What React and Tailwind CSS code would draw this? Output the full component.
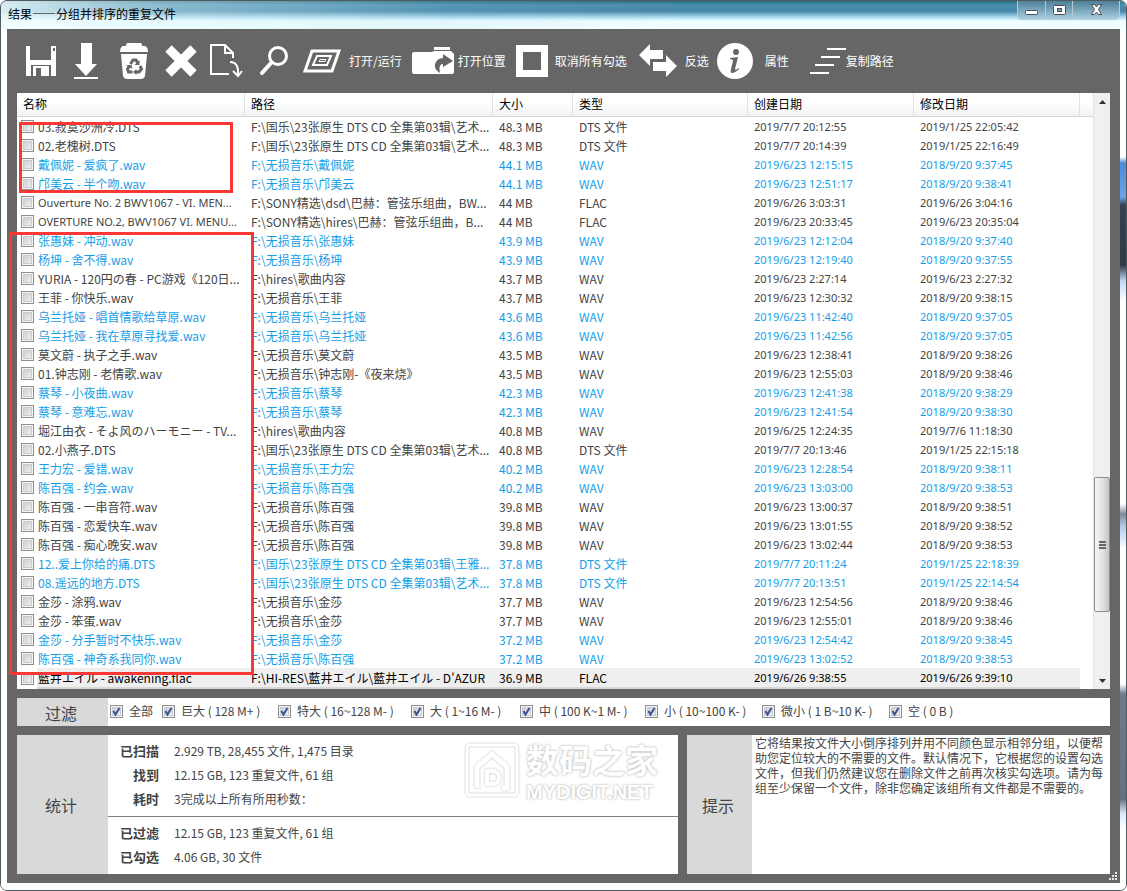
const latinText = 'font-["Noto_Sans","Noto_Sans_CJK_SC",sans-serif] text-[11px]'

const columns = [
  { key: 'name', label: '名称', width: 'w-[228px]' },
  { key: 'path', label: '路径', width: 'w-[248px]' },
  { key: 'size', label: '大小', width: 'w-[80px]' },
  { key: 'type', label: '类型', width: 'w-[175px]' },
  { key: 'created', label: '创建日期', width: 'w-[166px]' },
  { key: 'modified', label: '修改日期', width: 'w-[166px]' },
]

// [group colour, name, path, size, type, created, modified]
const files = [
  [0, '03.寂寞沙洲冷.DTS', 'F:\\国乐\\23张原生 DTS CD 全集第03辑\\艺术...', '48.3 MB', 'DTS 文件', '2019/7/7 20:12:55', '2019/1/25 22:05:42'],
  [0, '02.老槐树.DTS', 'F:\\国乐\\23张原生 DTS CD 全集第03辑\\艺术...', '48.3 MB', 'DTS 文件', '2019/7/7 20:14:39', '2019/1/25 22:16:49'],
  [1, '戴佩妮 - 爱疯了.wav', 'F:\\无损音乐\\戴佩妮', '44.1 MB', 'WAV', '2019/6/23 12:15:15', '2018/9/20 9:37:45'],
  [1, '邝美云 - 半个吻.wav', 'F:\\无损音乐\\邝美云', '44.1 MB', 'WAV', '2019/6/23 12:51:17', '2018/9/20 9:38:41'],
  [0, 'Ouverture No. 2 BWV1067 - VI. MEN...', 'F:\\SONY精选\\dsd\\巴赫：管弦乐组曲，BW...', '44 MB', 'FLAC', '2019/6/26 3:03:31', '2019/6/26 3:04:16'],
  [0, 'OVERTURE NO.2, BWV1067 VI. MENU...', 'F:\\SONY精选\\hires\\巴赫：管弦乐组曲，B...', '44 MB', 'FLAC', '2019/6/23 20:33:45', '2019/6/23 20:35:04'],
  [1, '张惠妹 - 冲动.wav', 'F:\\无损音乐\\张惠妹', '43.9 MB', 'WAV', '2019/6/23 12:12:04', '2018/9/20 9:37:40'],
  [1, '杨坤 - 舍不得.wav', 'F:\\无损音乐\\杨坤', '43.9 MB', 'WAV', '2019/6/23 12:19:40', '2018/9/20 9:37:55'],
  [0, 'YURIA - 120円の春 - PC游戏《120日...', 'F:\\hires\\歌曲内容', '43.7 MB', 'WAV', '2019/6/23 2:27:14', '2019/6/23 2:27:32'],
  [0, '王菲 - 你快乐.wav', 'F:\\无损音乐\\王菲', '43.7 MB', 'WAV', '2019/6/23 12:30:32', '2018/9/20 9:38:15'],
  [1, '乌兰托娅 - 唱首情歌给草原.wav', 'F:\\无损音乐\\乌兰托娅', '43.6 MB', 'WAV', '2019/6/23 11:42:40', '2018/9/20 9:37:05'],
  [1, '乌兰托娅 - 我在草原寻找爱.wav', 'F:\\无损音乐\\乌兰托娅', '43.6 MB', 'WAV', '2019/6/23 11:42:56', '2018/9/20 9:37:05'],
  [0, '莫文蔚 - 执子之手.wav', 'F:\\无损音乐\\莫文蔚', '43.5 MB', 'WAV', '2019/6/23 12:38:41', '2018/9/20 9:38:26'],
  [0, '01.钟志刚 - 老情歌.wav', 'F:\\无损音乐\\钟志刚-《夜来烧》', '43.5 MB', 'WAV', '2019/6/23 12:55:03', '2018/9/20 9:38:46'],
  [1, '蔡琴 - 小夜曲.wav', 'F:\\无损音乐\\蔡琴', '42.3 MB', 'WAV', '2019/6/23 12:41:38', '2018/9/20 9:38:29'],
  [1, '蔡琴 - 意难忘.wav', 'F:\\无损音乐\\蔡琴', '42.3 MB', 'WAV', '2019/6/23 12:41:54', '2018/9/20 9:38:30'],
  [0, '堀江由衣 - そよ风のハーモニー - TV...', 'F:\\hires\\歌曲内容', '40.8 MB', 'WAV', '2019/6/25 12:24:35', '2019/7/6 11:18:30'],
  [0, '02.小燕子.DTS', 'F:\\国乐\\23张原生 DTS CD 全集第03辑\\艺术...', '40.8 MB', 'DTS 文件', '2019/7/7 20:13:46', '2019/1/25 22:15:18'],
  [1, '王力宏 - 爱错.wav', 'F:\\无损音乐\\王力宏', '40.2 MB', 'WAV', '2019/6/23 12:28:54', '2018/9/20 9:38:11'],
  [1, '陈百强 - 约会.wav', 'F:\\无损音乐\\陈百强', '40.2 MB', 'WAV', '2019/6/23 13:03:00', '2018/9/20 9:38:53'],
  [0, '陈百强 - 一串音符.wav', 'F:\\无损音乐\\陈百强', '39.8 MB', 'WAV', '2019/6/23 13:00:37', '2018/9/20 9:38:51'],
  [0, '陈百强 - 恋爱快车.wav', 'F:\\无损音乐\\陈百强', '39.8 MB', 'WAV', '2019/6/23 13:01:55', '2018/9/20 9:38:52'],
  [0, '陈百强 - 痴心晚安.wav', 'F:\\无损音乐\\陈百强', '39.8 MB', 'WAV', '2019/6/23 13:02:44', '2018/9/20 9:38:53'],
  [1, '12..爱上你给的痛.DTS', 'F:\\国乐\\23张原生 DTS CD 全集第03辑\\王雅...', '37.8 MB', 'DTS 文件', '2019/7/7 20:11:24', '2019/1/25 22:18:39'],
  [1, '08.遥远的地方.DTS', 'F:\\国乐\\23张原生 DTS CD 全集第03辑\\艺术...', '37.8 MB', 'DTS 文件', '2019/7/7 20:13:51', '2019/1/25 22:14:54'],
  [0, '金莎 - 涂鸦.wav', 'F:\\无损音乐\\金莎', '37.7 MB', 'WAV', '2019/6/23 12:54:56', '2018/9/20 9:38:46'],
  [0, '金莎 - 笨蛋.wav', 'F:\\无损音乐\\金莎', '37.7 MB', 'WAV', '2019/6/23 12:55:01', '2018/9/20 9:38:46'],
  [1, '金莎 - 分手暂时不快乐.wav', 'F:\\无损音乐\\金莎', '37.2 MB', 'WAV', '2019/6/23 12:54:42', '2018/9/20 9:38:45'],
  [1, '陈百强 - 神奇系我同你.wav', 'F:\\无损音乐\\陈百强', '37.2 MB', 'WAV', '2019/6/23 13:02:52', '2018/9/20 9:38:53'],
  [2, '藍井エイル - awakening.flac', "F:\\HI-RES\\藍井エイル\\藍井エイル - D'AZUR", '36.9 MB', 'FLAC', '2019/6/26 9:38:55', '2019/6/26 9:39:10'],
]

const rowColors = ['text-[#444444]', 'text-[#159ee8]', 'text-black']

const filters = [
  { id: 'all', label: '全部', width: 'w-[52px]' },
  { id: 'huge', label: '巨大 ( 128 M+ )', width: 'w-[116px]' },
  { id: 'xlarge', label: '特大 ( 16~128 M- )', width: 'w-[133px]' },
  { id: 'large', label: '大 ( 1~16 M- )', width: 'w-[109px]' },
  { id: 'medium', label: '中 ( 100 K~1 M- )', width: 'w-[125px]' },
  { id: 'small', label: '小 ( 10~100 K- )', width: 'w-[117px]' },
  { id: 'tiny', label: '微小 ( 1 B~10 K- )', width: 'w-[127px]' },
  { id: 'empty', label: '空 ( 0 B )', width: 'w-[80px]' },
]

const scanStats = [
  ['已扫描', '2.929 TB, 28,455 文件, 1,475 目录'],
  ['找到', '12.15 GB, 123 重复文件, 61 组'],
  ['耗时', '3完成以上所有所用秒数：'],
]

const filterStats = [
  ['已过滤', '12.15 GB, 123 重复文件, 61 组'],
  ['已勾选', '4.06 GB, 30 文件'],
]

const SaveIcon = () => (
  <svg width="32" height="32" viewBox="0 0 32 32" fill="#fff">
    <path d="M1 1H5V15H26V1H31V31H26V20H6V31H1Z" />
    <path d="M8 21H24V31H16V23H11V31H8Z" />
    <path d="M28 3H30V6H28Z" fill="#666" />
  </svg>
)

const DownloadIcon = () => (
  <svg width="26" height="38" viewBox="0 0 26 38" fill="#fff">
    <path d="M8 1H19V22H24L13 34L2 22H8Z" />
    <path d="M1 35H25V37H1Z" />
  </svg>
)

const TrashIcon = () => (
  <svg width="30" height="38" viewBox="0 0 30 38">
    <path d="M7 5V3Q7 1 9 1H21Q23 1 23 3V5H20V4H10V5Z" fill="#fff" />
    <path d="M4 4H26Q29 5 29 10H1Q1 5 4 4Z" fill="#fff" />
    <path d="M2 12H28L26 34Q25 37 22 37H8Q5 37 4 34Z" fill="#fff" />
    <g fill="none" stroke="#666" strokeWidth="3">
      <path d="M11.500 22L14 18H17L19 21.500" />
      <path d="M21 24L22.500 27L20 30H16.500" />
      <path d="M13.500 30H9.500L8.500 27L10.500 24" />
    </g>
    <path d="M20.500 18V23H15.500ZM17.500 27V33L14 30ZM7 23H12.500L13.500 27Z" fill="#666" />
  </svg>
)

const DeleteIcon = () => (
  <svg width="32" height="32" viewBox="0 0 32 32">
    <path d="M3.500 3.500L28.500 28.500M28.500 3.500L3.500 28.500" stroke="#fff" strokeWidth="9" />
  </svg>
)

const ExportIcon = () => (
  <svg width="34" height="36" viewBox="0 0 34 36" fill="none" stroke="#fff" strokeWidth="2">
    <path d="M20 31H2V2H16L24 10V15" />
    <path d="M16 2V10H24" />
    <path d="M21 19Q30 19 29 32" />
    <path d="M24 28L29 33L33 28" />
  </svg>
)

const SearchIcon = () => (
  <svg width="30" height="32" viewBox="0 0 30 32" fill="none" stroke="#fff" strokeLinecap="round">
    <circle cx="19" cy="11" r="8.500" strokeWidth="3" />
    <path d="M12 18L3 28" strokeWidth="4" />
  </svg>
)

const RunIcon = () => (
  <svg width="38" height="24" viewBox="0 0 38 24" fill="none" stroke="#fff">
    <path d="M9 2H36L29 22H2Z" strokeWidth="3" />
    <path d="M14 7H28L24 16H10Z" strokeWidth="2" />
    <path d="M17 10.500H23L22 12.500H16Z" strokeWidth="1" />
  </svg>
)

const FolderIcon = () => (
  <svg width="42" height="30" viewBox="0 0 42 30">
    <path d="M22 1H38V4H22Z" fill="#fff" />
    <path d="M2 6H20L22 5H39L42 8V26Q42 28 40 28H2Q0 28 0 26V8Q0 6 2 6Z" fill="#fff" />
    <path d="M31 8L41 15L31 21V18Q26 18 28 27Q22 24 23 18Q25 12 31 12Z" fill="#666" />
  </svg>
)

const SquareIcon = () => (
  <svg width="32" height="32" viewBox="0 0 32 32">
    <path fillRule="evenodd" d="M0 0H32V32H0ZM7 7V25H25V7Z" fill="#fff" />
  </svg>
)

const InvertIcon = () => (
  <svg width="38" height="34" viewBox="0 0 38 34" fill="#fff">
    <path d="M0 11L11 0V6H24V15H11V22Z" />
    <path d="M14 18H27V11L38 22L27 33V27H14Z" />
  </svg>
)

const InfoIcon = () => (
  <svg width="36" height="36" viewBox="0 0 36 36">
    <circle cx="18" cy="18" r="18" fill="#fff" />
    <circle cx="19" cy="9" r="3" fill="#666" />
    <path d="M13 15L21 14L18 26Q18 28 22 25L22 26Q18 30 15 30Q13 30 14 26L16 18Q16 16 13 16Z" fill="#666" />
  </svg>
)

const CopyPathIcon = () => (
  <svg width="37" height="28" viewBox="0 0 37 28" stroke="#fff" strokeWidth="2">
    <path d="M18 2H37M12 10H31M6 18H25M1 26H20" />
  </svg>
)

const tools = [
  { key: 'save', title: '保存', icon: SaveIcon, className: 'ml-2' },
  { key: 'download', title: '导入', icon: DownloadIcon, className: 'ml-4' },
  { key: 'recycle', title: '回收站', icon: TrashIcon, className: 'ml-5' },
  { key: 'delete', title: '删除', icon: DeleteIcon, className: 'ml-4' },
  { key: 'move', title: '移动', icon: ExportIcon, className: 'ml-3' },
  { key: 'search', title: '搜索', icon: SearchIcon, className: 'ml-4' },
  { key: 'run', label: '打开/运行', icon: RunIcon, className: 'ml-3.5 gap-2' },
  { key: 'location', label: '打开位置', icon: FolderIcon, className: 'ml-2.5 gap-1' },
  { key: 'uncheck', label: '取消所有勾选', icon: SquareIcon, className: 'ml-2.5 gap-[7px]' },
  { key: 'invert', label: '反选', icon: InvertIcon, className: 'ml-3 gap-2' },
  { key: 'props', label: '属性', icon: InfoIcon, className: 'ml-2 gap-3' },
  { key: 'copy', label: '复制路径', icon: CopyPathIcon, className: 'ml-5' },
]

function Checkbox({ id, defaultChecked = false }) {
  return (
    <span className="relative block size-[13px] shrink-0">
      <input
        id={id}
        type="checkbox"
        defaultChecked={defaultChecked}
        className="peer block size-[13px] appearance-none border border-[#8e8f8f] bg-linear-to-br from-[#c4c8cc] to-[#f6f6f6] shadow-[inset_0_0_0_1px_#f4f4f4,inset_0_0_0_2px_#c8ccd0]"
      />
      <svg
        viewBox="0 0 13 13"
        className="pointer-events-none absolute inset-0 hidden size-[13px] peer-checked:block"
        fill="none"
        stroke="#3d4f96"
        strokeWidth="2"
      >
        <path d="M3.500 6L5.500 9.500L9.500 3" />
      </svg>
    </span>
  )
}

function TitleBar() {
  return (
    <header className="flex h-7 items-start justify-between bg-[linear-gradient(to_right,rgba(240,253,255,0.85)_0%,rgba(220,245,250,0.45)_14%,rgba(160,210,225,0.15)_40%,transparent_60%),linear-gradient(to_bottom,#2b6d80_0,#4a8fb0_4px,#4585a8_10px,#b8e4f6_17px,#effdff_20px,#f2ffff_28px)] pr-1.5 pl-[7px]">
      <h1 className="pt-1 text-[12px] leading-[18px] text-black">结果——分组并排序的重复文件</h1>
      <div className="flex h-[19px] overflow-hidden rounded-b-[5px] border border-t-0 border-[#b5cbd6] bg-linear-to-b from-[#4d8098] to-[#a9cfe0]">
        <button aria-label="最小化" className="flex w-[28px] items-center justify-center border-r border-[#b5cbd6]">
          <svg width="13" height="14" viewBox="0 0 13 14">
            <rect x="0.500" y="7.500" width="12" height="4" rx="1" fill="#fff" stroke="#4a4a5a" />
          </svg>
        </button>
        <button aria-label="最大化" className="flex w-[27px] items-center justify-center border-r border-[#b5cbd6]">
          <svg width="13" height="11" viewBox="0 0 13 11">
            <rect x="0.500" y="0.500" width="12" height="9" rx="1" fill="#fff" stroke="#4a4a5a" />
            <rect x="4.500" y="3.500" width="4" height="3" fill="#6fa0b8" stroke="#4a4a5a" />
          </svg>
        </button>
        <button aria-label="关闭" className="flex w-[46px] items-center justify-center">
          <svg width="13" height="12" viewBox="0 0 13 12">
            <path
              d="M1.500 0.500H4.500L6.500 3L8.500 0.500H11.500L8.500 5.500L11.500 10.500H8.500L6.500 8L4.500 10.500H1.500L4.500 5.500Z"
              fill="#fff"
              stroke="#4a4a5a"
            />
          </svg>
        </button>
      </div>
    </header>
  )
}

function Toolbar() {
  return (
    <div className="flex h-16 items-center">
      {tools.map((tool) => {
        const Icon = tool.icon
        return (
          <button
            key={tool.key}
            aria-label={tool.label || tool.title}
            className={`flex shrink-0 items-center text-[12px] leading-4 whitespace-nowrap text-white ${tool.className}`}
          >
            <Icon />
            {tool.label && <span>{tool.label}</span>}
          </button>
        )
      })}
    </div>
  )
}

function FileRow({ file, index }) {
  const [color, name, path, size, type, created, modified] = file
  const selected = color === 2
  const fill = selected ? 'border-b-2 border-[#d8d8d8] bg-[#efefef]' : ''
  const cell = `overflow-hidden p-0 pl-1.5 leading-[19px] ${fill}`
  const latinName = /^[\x20-\x7e]+$/.test(name)

  return (
    <tr className={`h-[19px] ${rowColors[color]}`}>
      <td className="p-0">
        <div className="flex items-center pl-1">
          <Checkbox id={`file-${index}`} />
          <label
            htmlFor={`file-${index}`}
            className={`ml-[3px] h-[19px] min-w-0 flex-1 overflow-hidden pl-px leading-[19px] ${fill} ${selected ? 'box-content' : ''} ${latinName ? latinText : ''}`}
          >
            {name}
          </label>
        </div>
      </td>
      <td className={cell}>{path}</td>
      <td className={cell}>{size}</td>
      <td className={cell}>{type}</td>
      <td className={`${cell} ${latinText}`}>{created}</td>
      <td className={`${cell} ${latinText}`}>{modified}</td>
      <td className="p-0" />
    </tr>
  )
}

function FileList() {
  return (
    <section className="relative flex bg-white">
      <div className="min-w-0 flex-1 overflow-hidden">
        <table className="w-full table-fixed border-separate border-spacing-0 text-left text-[12px] whitespace-nowrap">
          <thead>
            <tr className="h-6">
              {columns.map((col) => (
                <th
                  key={col.key}
                  className={`border-r border-b border-r-[#e0e3e6] border-b-[#d5d5d5] bg-linear-to-b from-white from-40% to-[#f1f2f4] p-0 pb-0.5 pl-1.5 font-normal text-black ${col.width}`}
                >
                  {col.label}
                </th>
              ))}
              <th className="border-b border-[#d5d5d5] bg-linear-to-b from-white from-40% to-[#f1f2f4] p-0" />
            </tr>
          </thead>
          <tbody>
            {files.map((file, i) => (
              <FileRow key={i} file={file} index={i} />
            ))}
          </tbody>
        </table>
      </div>

      <div className="flex w-[17px] shrink-0 flex-col border-l border-[#e3e3e3] bg-[#f0f0f0]">
        <button aria-label="向上滚动" className="flex h-[17px] items-center justify-center">
          <svg width="7" height="4" viewBox="0 0 7 4">
            <path d="M3.500 0L7 4H0Z" fill="#333" />
          </svg>
        </button>
        <div className="grow-[367] basis-0" />
        <div className="flex grow-[133] basis-0 flex-col items-center justify-center gap-px rounded-xs border border-[#8f8f8f] bg-linear-to-r from-[#f6f6f6] via-[#e4e4e8] to-[#c4c4ca]">
          <span className="h-0.5 w-[7px] bg-[#666]" />
          <span className="h-0.5 w-[7px] bg-[#666]" />
          <span className="h-0.5 w-[7px] bg-[#666]" />
        </div>
        <div className="grow-[60] basis-0" />
        <button aria-label="向下滚动" className="flex h-[17px] items-center justify-center">
          <svg width="7" height="4" viewBox="0 0 7 4">
            <path d="M3.500 4L7 0H0Z" fill="#333" />
          </svg>
        </button>
      </div>

      {/* highlighted groups */}
      <div className="pointer-events-none absolute top-[29px] left-[2px] h-[71px] w-[214px] border-3 border-[#fb3736]" />
      <div className="pointer-events-none absolute top-[139px] left-[-8px] h-[443px] w-[245px] border-3 border-[#fb3736]" />
    </section>
  )
}

function FilterBar() {
  return (
    <section className="flex h-7 bg-white">
      <h2 className="flex w-[91px] shrink-0 items-center justify-center bg-[#d9d9d9] pt-0.5 pr-[3px] text-[16px] text-[#444444]">
        过滤
      </h2>
      <div className="flex items-center pb-0.5 pl-0.5">
        {filters.map((item) => (
          <div key={item.id} className={`flex shrink-0 items-center gap-1.5 ${item.width}`}>
            <Checkbox id={item.id} defaultChecked />
            <label htmlFor={item.id} className="text-[12px] leading-4 whitespace-nowrap text-[#444444]">
              {item.label}
            </label>
          </div>
        ))}
      </div>
    </section>
  )
}

function StatRows({ rows }) {
  return rows.map(([label, value]) => (
    <div key={label} className="flex h-6 items-center gap-[15px] text-[12px]">
      <dt className="w-[51px] text-right text-[13px] font-bold">{label}</dt>
      <dd>{value}</dd>
    </div>
  ))
}

function Watermark() {
  return (
    <div className="pointer-events-none absolute top-0.5 right-5 flex items-center gap-[7px] text-white">
      <svg
        width="54"
        height="56"
        viewBox="0 0 54 54"
        fill="none"
        className="drop-shadow-[0_0_1px_#bbbbbb]"
      >
        <rect x="2" y="2" width="50" height="50" rx="3" stroke="#fff" strokeWidth="3" />
        <path d="M12 45V24L27 11L42 24V45H37" stroke="#fff" strokeWidth="5" />
        <path d="M22 28H27Q34 28 34 34.500Q34 41 27 41H22Z" stroke="#fff" strokeWidth="4" />
      </svg>
      <div className="[text-shadow:0_0_2px_#bbbbbb,0_0_3px_#cccccc]">
        <p className="text-[33px] leading-[45px] font-bold">数码之家</p>
        <p className='font-["Liberation_Sans",sans-serif] text-[20px] leading-5 font-bold'>MYDIGIT.NET</p>
      </div>
    </div>
  )
}

function StatsPanel() {
  return (
    <section className="flex min-w-0 flex-1 bg-white">
      <h2 className="flex w-[91px] shrink-0 items-center justify-center bg-[#d9d9d9] pr-[3px] text-[16px] text-[#444444]">
        统计
      </h2>
      <div className="relative min-w-0 flex-1 text-[#444444]">
        <dl className="h-[82px] border-b border-[#808080] pt-1">
          <StatRows rows={scanStats} />
        </dl>
        <dl className="pt-1">
          <StatRows rows={filterStats} />
        </dl>
        <Watermark />
      </div>
    </section>
  )
}

function TipPanel() {
  return (
    <section className="flex w-[423px] shrink-0 bg-white">
      <h2 className="flex w-[65px] shrink-0 items-center justify-center bg-[#d9d9d9] pr-[3px] text-[16px] text-[#444444]">
        提示
      </h2>
      <p className="flex-1 pr-1 pl-[3px] text-[12px] leading-[15px] text-[#444444]">
        它将结果按文件大小倒序排列并用不同颜色显示相邻分组，以便帮助您定位较大的不需要的文件。默认情况下，它根据您的设置勾选文件，但我们仍然建议您在删除文件之前再次核实勾选项。请为每组至少保留一个文件，除非您确定该组所有文件都是不需要的。
      </p>
    </section>
  )
}

export default function App() {
  return (
    <div
      lang="zh-CN"
      className='flex min-h-screen flex-col overflow-hidden rounded-[7px] border border-[#4d5a60] bg-white font-["Noto_Sans_CJK_SC",sans-serif]'
    >
      <TitleBar />
      <div className="flex flex-1 bg-[linear-gradient(to_bottom,#fff_128px,#4a8ad8_134px,#6aa4ea_168px,#34424e_176px,#303a44_236px,#c3d8f5_252px,#fff_272px,#fff_475px,#7f8b9c_485px,#b5ccec_498px,#fff_520px,#fff_655px,#6d7b8c_665px,#66717f_770px,#dbebff_785px,#fff_800px)]">
        <div className="w-1.5 shrink-0 bg-white" />
        <main className="relative mb-[7px] flex min-w-0 flex-1 flex-col bg-[#666666] px-2.5 pb-[9px]">
          <Toolbar />
          <FileList />
          <div className="h-[9px]" />
          <FilterBar />
          <div className="h-[9px]" />
          <div className="flex min-h-[139px] flex-1 gap-[9px]">
            <StatsPanel />
            <TipPanel />
          </div>
          <svg width="9" height="9" viewBox="0 0 9 9" className="absolute right-0.5 bottom-0.5" fill="#e6e6e6">
            <path d="M6 0h2v2h-2zM3 3h2v2h-2zM6 3h2v2h-2zM0 6h2v2h-2zM3 6h2v2h-2zM6 6h2v2h-2z" />
          </svg>
        </main>
        <div className="w-1.5 shrink-0" />
      </div>
    </div>
  )
}
